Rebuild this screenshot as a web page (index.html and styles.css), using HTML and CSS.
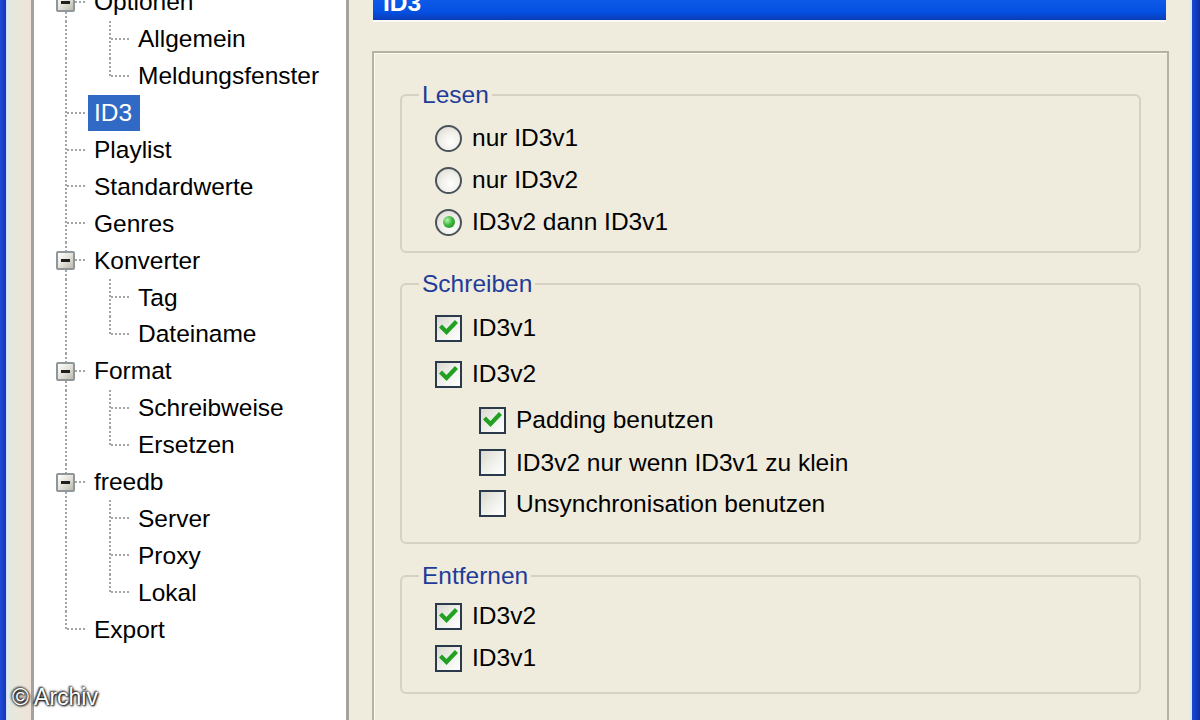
FILE: index.html
```html
<!DOCTYPE html>
<html lang="de">
<head>
<meta charset="utf-8">
<title>ID3 Optionen</title>
<link rel="stylesheet" href="styles.css">
</head>
<body>
<div class="screen">
  <div class="edge-left"></div>

  <div class="tree">
    <ul class="tree-list">
      <li class="node l1"><span class="gut"><span class="expander"></span></span><span class="label">Optionen</span></li>
      <li class="node l2"><span class="gut"></span><span class="label">Allgemein</span></li>
      <li class="node l2 last"><span class="gut"></span><span class="label">Meldungsfenster</span></li>
      <li class="node l1"><span class="gut"></span><span class="label sel">ID3</span></li>
      <li class="node l1"><span class="gut"></span><span class="label">Playlist</span></li>
      <li class="node l1"><span class="gut"></span><span class="label">Standardwerte</span></li>
      <li class="node l1"><span class="gut"></span><span class="label">Genres</span></li>
      <li class="node l1"><span class="gut"><span class="expander"></span></span><span class="label">Konverter</span></li>
      <li class="node l2"><span class="gut"></span><span class="label">Tag</span></li>
      <li class="node l2 last"><span class="gut"></span><span class="label">Dateiname</span></li>
      <li class="node l1"><span class="gut"><span class="expander"></span></span><span class="label">Format</span></li>
      <li class="node l2"><span class="gut"></span><span class="label">Schreibweise</span></li>
      <li class="node l2 last"><span class="gut"></span><span class="label">Ersetzen</span></li>
      <li class="node l1"><span class="gut"><span class="expander"></span></span><span class="label">freedb</span></li>
      <li class="node l2"><span class="gut"></span><span class="label">Server</span></li>
      <li class="node l2"><span class="gut"></span><span class="label">Proxy</span></li>
      <li class="node l2 last"><span class="gut"></span><span class="label">Lokal</span></li>
      <li class="node l1 end"><span class="gut"></span><span class="label">Export</span></li>
    </ul>
  </div>

  <div class="content">
    <div class="titlebar"><span class="title-text">ID3</span></div>
    <div class="panel">
      <fieldset class="group g-lesen">
        <legend>Lesen</legend>
        <div class="group-body">
          <div class="opt"><span class="rb"></span><span>nur ID3v1</span></div>
          <div class="opt"><span class="rb"></span><span>nur ID3v2</span></div>
          <div class="opt"><span class="rb on"></span><span>ID3v2 dann ID3v1</span></div>
        </div>
      </fieldset>

      <fieldset class="group g-schreiben">
        <legend>Schreiben</legend>
        <div class="group-body">
          <div class="opt h44"><span class="cb"><svg class="check" viewBox="0 0 23 23" width="23" height="23"><path d="M5 10.5 L9.5 15 L18 6"/></svg></span><span>ID3v1</span></div>
          <div class="opt h48"><span class="cb"><svg class="check" viewBox="0 0 23 23" width="23" height="23"><path d="M5 10.5 L9.5 15 L18 6"/></svg></span><span>ID3v2</span></div>
          <div class="opt h44 sub"><span class="cb"><svg class="check" viewBox="0 0 23 23" width="23" height="23"><path d="M5 10.5 L9.5 15 L18 6"/></svg></span><span>Padding benutzen</span></div>
          <div class="opt h41 sub"><span class="cb"></span><span>ID3v2 nur wenn ID3v1 zu klein</span></div>
          <div class="opt h41 sub"><span class="cb"></span><span>Unsynchronisation benutzen</span></div>
        </div>
      </fieldset>

      <fieldset class="group g-entfernen">
        <legend>Entfernen</legend>
        <div class="group-body">
          <div class="opt"><span class="cb"><svg class="check" viewBox="0 0 23 23" width="23" height="23"><path d="M5 10.5 L9.5 15 L18 6"/></svg></span><span>ID3v2</span></div>
          <div class="opt"><span class="cb"><svg class="check" viewBox="0 0 23 23" width="23" height="23"><path d="M5 10.5 L9.5 15 L18 6"/></svg></span><span>ID3v1</span></div>
        </div>
      </fieldset>
    </div>
  </div>

  <div class="edge-right"></div>

  <div class="watermark">© Archiv</div>
</div>
</body>
</html>
```
FILE: styles.css
```css
* { box-sizing: border-box; }

html, body {
  margin: 0;
  padding: 0;
}

body {
  width: 1200px;
  height: 720px;
  overflow: hidden;
  font-family: "Liberation Sans", Arial, sans-serif;
  font-size: 24.5px;
  color: #000;
  background: #efebdd;
}

.screen {
  position: relative;
  display: flex;
  width: 1200px;
  height: 720px;
  overflow: hidden;
  background: #efebdd;
}

/* window edges */
.edge-left {
  flex: 0 0 31px;
  background: linear-gradient(to right,
    #1f4bd8 0, #1436b4 6px,
    #d4e1f3 6px, #e2eaf2 9px,
    #e6e9dc 9px, #efe3d9 31px);
}

.edge-right {
  flex: 0 0 31px;
  background: linear-gradient(to right,
    #efebdd 0, #efebdd 21px,
    #dbe5f4 21px, #dbe5f4 23px,
    #1b47d4 23px, #0c2ea6 31px);
}

/* tree view */
.tree {
  flex: 0 0 318px;
  height: 720px;
  background: #fff;
  border-left: 3px solid #a3a29c;
  border-right: 3px solid #a3a29c;
  overflow: hidden;
}

.tree-list {
  list-style: none;
  margin: -16px 0 0;
  padding: 0;
}

.node {
  display: flex;
  align-items: center;
  height: 36.9px;
  white-space: nowrap;
}

.gut {
  display: flex;
  align-items: center;
  align-self: stretch;
  flex: 0 0 auto;
}

.l1 .gut {
  width: 54px;
  background:
    repeating-linear-gradient(to right, #a4a4a4 0 2px, transparent 2px 4px) 33px 17px / 20px 2px no-repeat,
    repeating-linear-gradient(to bottom, #a4a4a4 0 2px, transparent 2px 4px) 31px 0 / 2px 100% no-repeat;
}

.l1.end .gut {
  background:
    repeating-linear-gradient(to right, #a4a4a4 0 2px, transparent 2px 4px) 33px 17px / 20px 2px no-repeat,
    repeating-linear-gradient(to bottom, #a4a4a4 0 2px, transparent 2px 4px) 31px 0 / 2px 18px no-repeat;
}

.l2 .gut {
  width: 99px;
  background:
    repeating-linear-gradient(to right, #a4a4a4 0 2px, transparent 2px 4px) 77px 17px / 20px 2px no-repeat,
    repeating-linear-gradient(to bottom, #a4a4a4 0 2px, transparent 2px 4px) 75px 0 / 2px 100% no-repeat,
    repeating-linear-gradient(to bottom, #a4a4a4 0 2px, transparent 2px 4px) 31px 0 / 2px 100% no-repeat;
}

.l2.last .gut {
  background:
    repeating-linear-gradient(to right, #a4a4a4 0 2px, transparent 2px 4px) 77px 17px / 20px 2px no-repeat,
    repeating-linear-gradient(to bottom, #a4a4a4 0 2px, transparent 2px 4px) 75px 0 / 2px 18px no-repeat,
    repeating-linear-gradient(to bottom, #a4a4a4 0 2px, transparent 2px 4px) 31px 0 / 2px 100% no-repeat;
}

.expander {
  display: flex;
  align-items: center;
  justify-content: center;
  width: 19px;
  height: 19px;
  margin-left: 22px;
  border: 2px solid #8f979b;
  border-radius: 2px;
  background: linear-gradient(135deg, #ffffff 0%, #e4e2da 50%, #bdbab0 100%);
}

.expander::before {
  content: "";
  width: 9px;
  height: 3px;
  background: #1e1e1e;
}

.label {
  display: block;
  height: 36px;
  line-height: 36px;
  padding: 0 8px 0 6px;
  color: #000;
}

.l2 .label {
  padding-left: 5px;
}

.label.sel {
  background: #316ac5;
  color: #fff;
}

/* right content */
.content {
  flex: 0 0 797px;
  margin-left: 23px;
}

.titlebar {
  width: 793px;
  height: 20px;
  margin-left: 1px;
  padding-left: 10px;
  overflow: hidden;
  color: #fff;
  font-weight: bold;
  background: linear-gradient(#0d5ae8 0%, #0450e2 60%, #0a3cb8 100%);
  box-shadow: 0 2px 0 #fbfaf4;
}

.title-text {
  display: block;
  line-height: 24px;
  margin-top: -9px;
}

.panel {
  height: 700px;
  margin-top: 31px;
  padding: 28px 26px 0 26px;
  border: 2px solid #b6b1a1;
  border-bottom: none;
  box-shadow: inset 1px 1px 0 #fbf9f1;
}

.group {
  margin: 0;
  padding: 8px 0 8px 0;
  min-width: 0;
  border: 2px solid #d6d1c0;
  border-radius: 6px;
}

.group legend {
  margin-left: 17px;
  padding: 0 3px;
  line-height: 28px;
  color: #1f3c98;
}

.g-schreiben {
  margin-top: 17px;
  padding-bottom: 18px;
}

.g-entfernen {
  margin-top: 18px;
  padding-top: 5px;
  padding-bottom: 13px;
}

.group-body {
  padding-left: 33px;
}

.opt {
  display: flex;
  align-items: center;
  height: 42px;
  white-space: nowrap;
}

.opt.h44 { height: 44px; }
.opt.h48 { height: 48px; }
.opt.h41 { height: 41px; }

.opt.sub {
  padding-left: 44px;
}

.cb,
.rb {
  display: flex;
  align-items: center;
  justify-content: center;
  flex: 0 0 27px;
  height: 27px;
  margin-right: 10px;
}

.cb {
  border: 2px solid #2a3a4c;
  background: linear-gradient(135deg, #d9d8d0 0%, #eeeee8 45%, #ffffff 100%);
}

.check path {
  fill: none;
  stroke: #22a022;
  stroke-width: 4.2;
  stroke-linecap: square;
  stroke-linejoin: miter;
}

.rb {
  border-radius: 50%;
  border: 2px solid #4a535b;
  background: radial-gradient(circle at 60% 65%, #ffffff 0%, #f1f0ea 45%, #d6d4cb 100%);
}

.rb.on::after {
  content: "";
  width: 12px;
  height: 12px;
  border-radius: 50%;
  background: radial-gradient(circle at 35% 35%, #b8f5b0 0%, #3fb83f 45%, #1b7f1b 100%);
}

/* watermark overlay */
.watermark {
  position: absolute;
  left: 12px;
  top: 684px;
  line-height: 26px;
  font-size: 23px;
  color: #fff;
  text-shadow: 0 0 3px #000, 1px 1px 2px #000, -1px -1px 2px #333;
}
```
